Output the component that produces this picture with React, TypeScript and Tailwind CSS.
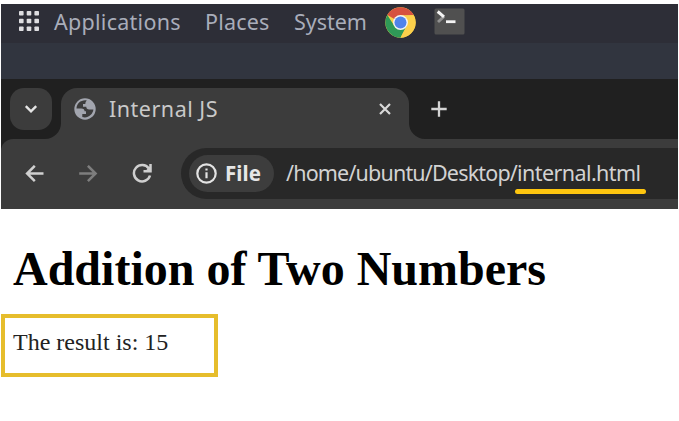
import React from "react";

function ChromeLogo() {
  return (
    <svg className="size-[31px]" viewBox="0 0 48 48">
      <circle cx="24" cy="24" r="23.5" fill="#fbd04b" />
      <path d="M24 24 3.65 12.25A23.5 23.5 0 0 1 44.35 12.25L24 13Z" fill="#d6513f" />
      <path d="M3.65 12.25A23.5 23.5 0 0 0 24 47.5L33.5 29.5 24 24 14.5 29.5Z" fill="#2f9a57" />
      <path d="M24 13H44.7A23.5 23.5 0 0 1 24 47.5L33.5 29.5Z" fill="#fbd04b" />
      <circle cx="24" cy="24" r="11.5" fill="#f4f4f4" />
      <circle cx="24" cy="24" r="9.3" fill="#4f83ea" />
    </svg>
  );
}

function TopPanel() {
  return (
    <nav className="flex h-[39px] items-center bg-[#2d2e37] pl-[18px] text-[#a9adba]">
      <svg className="-mt-[5px] size-5" viewBox="0 0 20 20" fill="#dedee1">
        {[0, 7.7, 15.4].map((y) =>
          [0, 7.7, 15.4].map((x) => (
            <rect key={`${x}-${y}`} x={x} y={y} width="4.6" height="4.6" rx="0.8" />
          )),
        )}
      </svg>
      <div className="-mt-[3px] flex text-[21.5px] leading-[30px]">
        <span className="ml-[15px] w-[151px] tracking-[0.27px]">Applications</span>
        <span className="w-[89px] tracking-[0.2px]">Places</span>
        <span className="w-[91px] tracking-[-0.05px]">System</span>
      </div>
      <div className="-mt-[3px]">
        <ChromeLogo />
      </div>
      <svg className="-mt-[4px] ml-[18px] h-[27px] w-[31px]" viewBox="0 0 31 27">
        <rect x="0.5" y="0.5" width="30" height="26" rx="1.5" fill="#505050" />
        <path d="M10 8.500 4 14" fill="none" stroke="#929292" strokeWidth="3" />
        <path d="m3.700 3.500 6.300 5.300" fill="none" stroke="#f4f4f4" strokeWidth="3" />
        <path d="M12 13.700h9.5" stroke="#f4f4f4" strokeWidth="2.8" />
      </svg>
    </nav>
  );
}

function TabStrip() {
  return (
    <div className="flex h-[60px] items-start bg-[#202020] pt-[9px] text-[#c9c9c9]">
      <div className="ml-[9px] flex size-[42px] items-center justify-center rounded-[14px] bg-[#3c3c3c]">
        <svg className="size-[14px]" viewBox="0 0 14 14" fill="none" stroke="#e4e4e4" strokeWidth="2.4">
          <path d="m1.8 4.2 5.2 5.2 5.2-5.2" />
        </svg>
      </div>
      <svg className="mt-[35px] -ml-[7px] h-4 w-4" viewBox="0 0 16 16" fill="#3c3c3c">
        <path d="M16 0v16H0A16 16 0 0 0 16 0Z" />
      </svg>
      <div className="flex h-[51px] w-[348px] items-start rounded-t-[16px] bg-[#3c3c3c] pl-[13px]">
        <svg className="mt-[10px] size-[22px]" viewBox="0 0 22 22">
          <circle cx="11" cy="11" r="10.7" fill="#a2a5ae" />
          <path
            d="M12.800 2.500C7.500 1.500 2.600 5.400 2.500 10.400H7.400c2.100 0 3.200 1.200 3.200 2.900h1.400v2.600H8.300v3.100c5.200 1.600 10.500-2 11.100-7.400h-4.200c-1.900 0-2.900-1-2.900-2.800H9V6h2.300c0-1.600.5-2.700 1.500-3.500Z"
            fill="#3c3c3c"
          />
        </svg>
        <span className="mt-[6px] ml-[13px] w-[269px] text-[21.5px] leading-[30px] tracking-[0.5px]">Internal JS</span>
        <svg className="mt-[14px] size-[14px]" viewBox="0 0 14 14" stroke="#d8d8d8" strokeWidth="2.2">
          <path d="m2 2 10 10M12 2 2 12" />
        </svg>
      </div>
      <svg className="mt-[35px] h-4 w-4" viewBox="0 0 16 16" fill="#3c3c3c">
        <path d="M0 0v16h16A16 16 0 0 1 0 0Z" />
      </svg>
      <svg className="mt-[13px] ml-[6px] size-4" viewBox="0 0 16 16" stroke="#d4d4d4" strokeWidth="2.3">
        <path d="M8 .3v15.400M.3 8h15.400" />
      </svg>
    </div>
  );
}

function Toolbar() {
  return (
    <div className="bg-[#202020]">
      <div className="flex h-[70px] items-start rounded-tl-[12px] bg-[#3c3c3c] pt-[9px] pl-6">
        <svg className="mt-[17px] size-[19px]" viewBox="0 0 19 19" fill="none" stroke="#d0d0d0" strokeWidth="2.5">
          <path d="M18.500 8.500H2M9.800.8 2.100 8.500l7.700 7.700" />
        </svg>
        <svg className="mt-[17px] ml-[35px] size-[19px]" viewBox="0 0 19 19" fill="none" stroke="#7e7e7e" strokeWidth="2.5">
          <path d="M.2 8.500h16M8.900.8l7.700 7.700-7.700 7.700" />
        </svg>
        <svg className="mt-[15px] ml-[34px] size-[20px]" viewBox="0 0 20 20" fill="none" stroke="#cfcfcf" strokeWidth="2.5">
          <path d="M18 12.500A8.200 8.200 0 1 1 16.800 5.400" />
          <path d="M18.500 1v7.200h-7" />
          <path d="M18.500 3v5.200H13Z" fill="#cfcfcf" stroke="none" />
        </svg>
        <div className="ml-[29px] flex h-[51px] flex-1 items-start rounded-l-[26px] bg-[#282828] pt-[7px] pl-2">
          <div className="flex h-[37px] w-[85px] items-center rounded-full bg-[#3d3d3d] pl-[7px]">
            <svg className="size-[21px]" viewBox="0 0 21 21" fill="none" stroke="#e3e3e3" strokeWidth="2.2">
              <circle cx="10.500" cy="10.500" r="9.200" />
              <path d="M10.500 9.200v6M10.500 5.400v2.100" />
            </svg>
            <span className="-mt-px ml-[8px] text-[20.5px] leading-[30px] font-bold tracking-[0.1px] text-[#e6e6e6]">File</span>
          </div>
          <div className="relative ml-3 text-[21.5px] leading-[36px] whitespace-nowrap text-[#d2d2d2]">
            <span className="tracking-[-0.82px]">/home/ubuntu/Desktop/</span>
            <span className="tracking-[-0.58px]">internal.html</span>
            <div className="absolute top-[34px] left-[229px] h-[5px] w-[131px] rounded-full bg-[#fdc50f]" />
          </div>
        </div>
      </div>
    </div>
  );
}

export default function App() {
  return (
    <div className="h-[421px] w-[679px] overflow-hidden bg-white px-px pt-1 font-['Noto_Sans','Open_Sans',sans-serif]">
      <TopPanel />
      <div className="h-9 bg-[#31353f]" />
      <TabStrip />
      <Toolbar />
      <main className="font-['Liberation_Serif',serif] text-black">
        <h1 className="mt-[32px] ml-3 text-[48px] leading-[56px] font-bold whitespace-nowrap">
          Addition of Two Numbers
        </h1>
        <div className="mt-[17px] h-[63px] w-[217px] border-4 border-[#e6bd2c] pt-[10px] pl-2">
          <p className="text-[24px] leading-7 text-[#222]">The result is: 15</p>
        </div>
      </main>
    </div>
  );
}
